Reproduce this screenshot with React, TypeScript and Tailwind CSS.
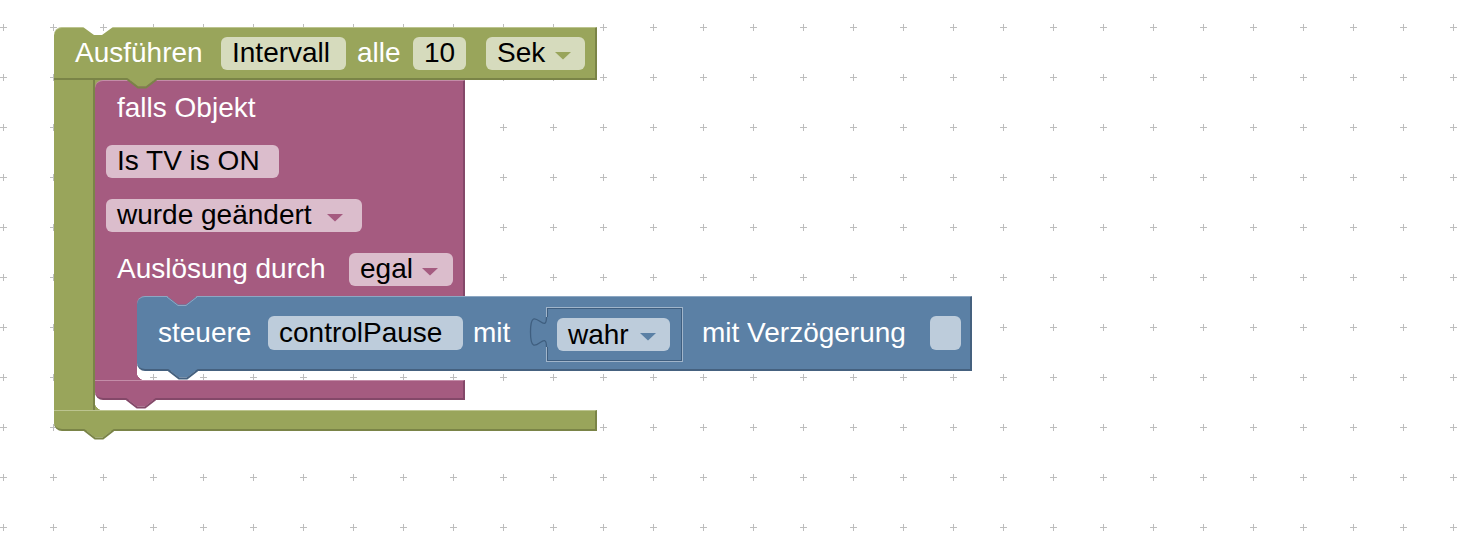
import React from 'react';

function Grid() {
  return (
    <svg className="absolute inset-0" width="1484" height="550">
      <defs>
        <pattern id="plus" x="0" y="24" width="50" height="50" patternUnits="userSpaceOnUse">
          <rect x="0" y="3" width="7" height="1" fill="#bdbdbd" />
          <rect x="3" y="0" width="1" height="7" fill="#bdbdbd" />
        </pattern>
      </defs>
      <rect width="1484" height="550" fill="url(#plus)" />
    </svg>
  );
}

function Arrow({ color }: { color: string }) {
  return (
    <svg width="16" height="8" viewBox="0 0 16 8" className="ml-auto mt-[5px] shrink-0">
      <path d="M0 0 H16 L8 7.5 Z" fill={color} />
    </svg>
  );
}

// connection tab sticking out below a block edge
function Tab({ className, fill, stroke, sw = 2 }: { className: string; fill: string; stroke?: string; sw?: number }) {
  return (
    <svg width="30" height="11" viewBox="0 0 30 11" className={`absolute ${className}`}>
      <path d="M0 0 H30 L19 8.5 H11 Z" fill={fill} />
      {stroke && <path d="M0 1 L11 9.5 H19 L30 1" fill="none" stroke={stroke} strokeWidth={sw} />}
    </svg>
  );
}

function Field({ className, arrow, children }: { className: string; arrow?: string; children: React.ReactNode }) {
  return (
    <div className={`flex shrink-0 items-center rounded-[6px] pl-[11px] text-black ${className}`}>
      <span>{children}</span>
      {arrow && <Arrow color={arrow} />}
    </div>
  );
}

function Socket() {
  return (
    <div className="relative mt-[3px] flex h-[55px] w-[137px] shrink-0 items-center border border-[#a1b5ca] pl-[10px] shadow-[inset_0_0_0_1px_#3f5e7f]">
      <svg className="absolute left-[-18px] top-[9px]" width="20" height="31" viewBox="0 0 20 31">
        <path d="M17.5 0 C17.5 20 1.5 -16 1.5 15 C1.5 46 17.5 10 17.5 30 L20 30 L20 0 Z" fill="#5b80a5" />
        <path d="M17.5 0 C17.5 20 1.5 -16 1.5 15 C1.5 46 17.5 10 17.5 30" fill="none" stroke="#3f5e7f" strokeWidth="1.3" />
      </svg>
      <Field className="h-[33px] w-[113px] bg-[#bdccdb] pr-[14px]" arrow="#5b80a5">
        wahr
      </Field>
    </div>
  );
}

function BlueBlock() {
  return (
    <div className="relative flex h-[75px] w-[835px] items-center rounded-l-[8px] border-t border-r-2 border-b-2 border-t-[#8ca7c3] border-r-[#45617f] border-b-[#45617f] bg-[#5b80a5] pl-[21px] text-white">
      <span className="w-[110px] shrink-0">steuere</span>
      <Field className="h-[34px] w-[195px] bg-[#bdccdb]">controlPause</Field>
      <span className="w-[83px] shrink-0 pl-[10px]">mit</span>
      <Socket />
      <span className="w-[247px] shrink-0 pl-[19px]">mit Verzögerung</span>
      <div className="h-[34px] w-[31px] shrink-0 rounded-[6px] bg-[#bdccdb]" />
      <Tab className="left-[31px] top-[72px]" fill="#5b80a5" stroke="#45617f" />
    </div>
  );
}

function PinkBlock() {
  return (
    <div className="relative w-[370px]">
      <div className="rounded-tl-[8px] border-t border-r-2 border-t-[#c48ca8] border-r-[#844869] bg-[#a55b80] text-white">
        <div className="flex h-[53px] items-center pl-[22px]">falls Objekt</div>
        <div className="flex h-[54px] items-center pl-[11px]">
          <Field className="h-[33px] w-[173px] bg-[#dbbdcc]">Is TV is ON</Field>
        </div>
        <div className="flex h-[54px] items-center pl-[11px]">
          <Field className="h-[33px] w-[256px] bg-[#dbbdcc] pr-[19px]" arrow="#a55b80">
            wurde geändert
          </Field>
        </div>
        <div className="flex h-[54px] items-center pl-[22px]">
          <span className="w-[232px] shrink-0">Auslösung durch</span>
          <Field className="h-[33px] w-[104px] bg-[#dbbdcc] pr-[15px]" arrow="#a55b80">
            egal
          </Field>
        </div>
      </div>
      <div className="flex h-[84px]">
        <div className="w-[42px] shrink-0 bg-[#a55b80]" />
        <div className="relative min-w-0 flex-1">
          <div className="absolute left-0 top-0 size-[10px] bg-[#a55b80]" />
          <div className="absolute bottom-0 left-0 size-[8px] bg-[radial-gradient(circle_at_100%_0,transparent_8px,#a55b80_8.5px)]" />
          <BlueBlock />
        </div>
      </div>
      <div className="h-[20px] rounded-bl-[8px] border-t border-r-2 border-b-2 border-t-[#c48ca8] border-r-[#844869] border-b-[#844869] bg-[#a55b80]" />
      <Tab className="left-[72px] top-[216px]" fill="#a55b80" stroke="#8ca7c3" sw={1} />
      <Tab className="left-[31px] top-[318px]" fill="#a55b80" stroke="#844869" />
    </div>
  );
}

export default function App() {
  return (
    <div className="relative h-[550px] w-[1484px] overflow-hidden bg-white font-['Liberation_Sans',Arial,sans-serif] text-[28px] leading-none">
      <Grid />

      {/* Ausführen block */}
      <div className="absolute left-[54px] top-[27px] w-[543px]">
        <div className="flex h-[53px] items-center rounded-tl-[8px] border-t border-r-2 border-b-2 border-t-[#bcc48f] border-r-[#7a8447] border-b-[#7a8447] bg-[#99a55b] pl-[21px] text-white [clip-path:polygon(0_0,29px_0,40px_8px,48px_8px,59px_0,100%_0,100%_100%,0_100%)]">
          <span className="w-[146px] shrink-0">Ausführen</span>
          <Field className="h-[33px] w-[125px] bg-[#d6dbbd]">Intervall</Field>
          <span className="w-[67px] shrink-0 pl-[11px]">alle</span>
          <Field className="h-[33px] w-[53px] bg-[#d6dbbd]">10</Field>
          <Field className="ml-[20px] h-[33px] w-[99px] bg-[#d6dbbd] pr-[14px]" arrow="#99a55b">
            Sek
          </Field>
        </div>
        <div className="flex h-[330px]">
          <div className="w-[41px] shrink-0 border-r-2 border-r-[#7a8447] bg-[#99a55b]" />
          <div className="relative min-w-0 flex-1">
            <div className="absolute left-0 top-0 size-[10px] bg-[#99a55b]" />
            <div className="absolute bottom-0 left-0 size-[8px] bg-[radial-gradient(circle_at_100%_0,transparent_8px,#99a55b_8.5px)]" />
            <PinkBlock />
          </div>
        </div>
        <div className="h-[21px] rounded-bl-[8px] border-t border-r-2 border-b-2 border-t-[#bcc48f] border-r-[#7a8447] border-b-[#7a8447] bg-[#99a55b]" />
        <Tab className="left-[73px] top-[51px]" fill="#99a55b" stroke="#7a8447" />
        <Tab className="left-[30px] top-[402px]" fill="#99a55b" stroke="#7a8447" />
      </div>
    </div>
  );
}
